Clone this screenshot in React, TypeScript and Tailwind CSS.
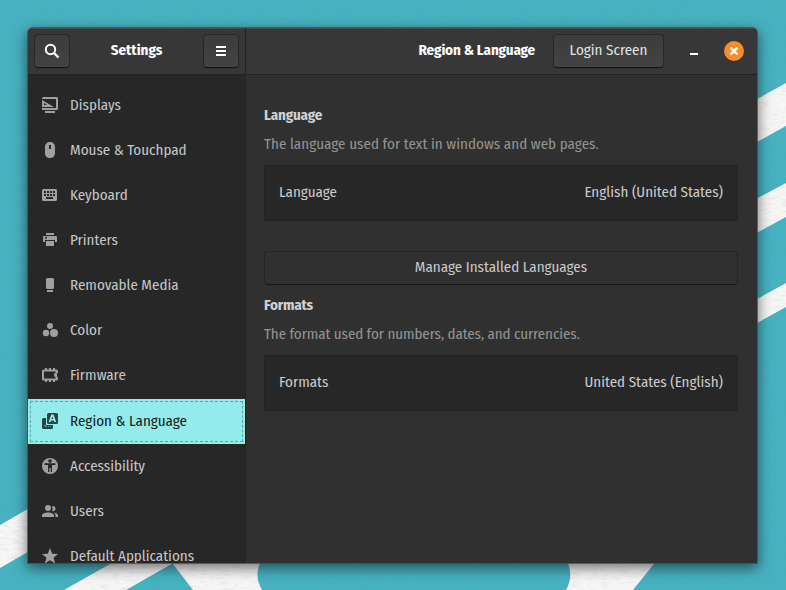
import type { ReactNode } from 'react';

type Item = { label: string; icon: ReactNode; selected?: boolean };

const icons = {
  displays: (
    <path fillRule="evenodd" d="M0 1.500Q0 0 1.500 0H14.500Q16 0 16 1.500V11.500Q16 13 14.500 13H0V11H14V2H0ZM0 3L12 10H0ZM2 6V8H5ZM3 14H13V16H3Z" />
  ),
  mouse: <path fillRule="evenodd" d="M8 0C11 0 13 2 13 5V11C13 14 11 16 8 16S3 14 3 11V5C3 2 5 0 8 0ZM7 3V7H9V3Z" />,
  keyboard: (
    <path fillRule="evenodd" d="M1.500 2H13.500Q15 2 15 3.500V12.500Q15 14 13.500 14H1.500Q0 14 0 12.500V3.500Q0 2 1.500 2ZM2 4V6H4V4ZM5 4V6H7V4ZM8 4V6H10V4ZM11 4V6H13V4ZM2 7V9H4V7ZM5 7V9H7V7ZM8 7V9H10V7ZM11 7V9H13V7ZM4 10V12H11V10Z" />
  ),
  printer: (
    <path fillRule="evenodd" d="M4 1H12V3H4ZM2 4H14Q15 4 15 5V10H13V8H3V10H1V5Q1 4 2 4ZM3 5V6.500H5V5ZM4 9H12V14H4Z" />
  ),
  media: <path d="M5.500 1H10.500Q12 1 12 2.500V10.500Q12 12 10.500 12H5.500Q4 12 4 10.500V2.500Q4 1 5.500 1ZM5 13H11V15H5Z" />,
  color: (
    <>
      <circle cx="8" cy="4" r="3" />
      <circle cx="4" cy="11" r="3.200" />
      <circle cx="12" cy="11" r="4" />
    </>
  ),
  firmware: (
    <path fillRule="evenodd" d="M3 1H5V2.500H7V1H9V2.500H11V1H13V2.500H14.500Q16 2.500 16 4V6H15V10H16V12Q16 13.500 14.500 13.500H13V15H11V13.500H9V15H7V13.500H5V15H3V13.500H1.500Q0 13.500 0 12V4Q0 2.500 1.500 2.500H3ZM2 4.500V11.500H13.500V10L12 9.300V6.700L13.500 6V4.500Z" />
  ),
  region: (
    <>
      <path d="M0 6.500Q0 5 1.500 5H4V12H11V14.500Q11 16 9.500 16H1.500Q0 16 0 14.500Z" />
      <path fillRule="evenodd" d="M6.500 0H14.500Q16 0 16 1.500V9.500Q16 11 14.500 11H6.500Q5 11 5 9.500V1.500Q5 0 6.500 0ZM9.300 1.500L6.700 9H8.600L9 7.500H11.800L12.300 9H14.200L11.500 1.500ZM10.400 3.700L11.300 6H9.500Z" />
      <path d="M2 12.500h2M3 13.500h2M6 13.500h1M8 13.500h1" stroke="#94ebeb" opacity=".5" />
    </>
  ),
  accessibility: (
    <path fillRule="evenodd" d="M8 0A8 8 0 1 1 8 16A8 8 0 1 1 8 0ZM8 1.300A1.800 1.800 0 1 0 8 4.900A1.800 1.800 0 1 0 8 1.300ZM2.500 5.300V7H6V14H7.300V10H8.700V14H10V7H13.500V5.300Z" />
  ),
  users: (
    <>
      <circle cx="6" cy="5" r="3" />
      <path d="M0 14V12.500C0 10.500 3 9.500 6 9.500S12 10.500 12 12.500V14Z" />
      <path d="M10 3.200A2.600 2.600 0 1 1 10 8Q11.200 5.500 10 3.200ZM12 9.500C14.500 9.800 16 11 16 12.500V14H13.500V12.500Q13.500 10.700 12 9.500Z" />
    </>
  ),
  star: <path d="M8 0L10.200 5.700L16 6L11.500 9.700L13.200 15.500L8 12.200L2.800 15.500L4.500 9.700L0 6L5.800 5.700Z" />,
};

const items: Item[] = [
  { label: 'Displays', icon: icons.displays },
  { label: 'Mouse & Touchpad', icon: icons.mouse },
  { label: 'Keyboard', icon: icons.keyboard },
  { label: 'Printers', icon: icons.printer },
  { label: 'Removable Media', icon: icons.media },
  { label: 'Color', icon: icons.color },
  { label: 'Firmware', icon: icons.firmware },
  { label: 'Region & Language', icon: icons.region, selected: true },
  { label: 'Accessibility', icon: icons.accessibility },
  { label: 'Users', icon: icons.users },
  { label: 'Default Applications', icon: icons.star },
];

function Wallpaper() {
  return (
    <svg className="absolute inset-0" width="786" height="590" viewBox="0 0 786 590">
      <defs>
        <filter id="weave" x="0" y="0" width="100%" height="100%">
          <feTurbulence type="fractalNoise" baseFrequency="0.1 0.5" numOctaves="2" seed="4" />
          <feColorMatrix values="0 0 0 0 0.15  0 0 0 0 0.27  0 0 0 0 0.28  0.9 0 0 0 -0.42" />
        </filter>
      </defs>
      <rect width="786" height="590" fill="#46b2c1" />
      <g fill="#f7f6f6">
        <path d="M740 108.500L786 83V126L740 151.500Z" />
        <path d="M740 207.500L786 183V217L740 242Z" />
        <path d="M740 308.500L786 283V307L740 332.500Z" />
        <path d="M0 525L40 502V545L0 568Z" />
        <path d="M64 590L126 555H264Q252 574 262 590H193L172.500 563.500L126 590Z" />
        <path d="M563 555H661L633 590H566Q576 572 563 555Z" />
      </g>
      <rect width="786" height="590" filter="url(#weave)" opacity=".35" />
    </svg>
  );
}

const button =
  'flex h-[34px] items-center justify-center rounded-[4px] border border-[#282828] border-b-[#151515] bg-linear-to-b from-[#3c3c3c] to-[#434343] shadow-[0_1px_1px_rgba(0,0,0,0.15)]';

function SettingCard({ name, value }: { name: string; value: string }) {
  return (
    <div className="mt-[11px] flex h-14 items-center justify-between border border-[#232323] bg-[#272727] px-3.5 pb-0.5 text-[#cbcbcb]">
      <span>{name}</span>
      <span>{value}</span>
    </div>
  );
}

export default function App() {
  return (
    <div className="relative h-[590px] w-[786px] overflow-hidden px-7 pt-7 text-[15px] leading-5 whitespace-nowrap [font-family:'Fira_Sans_Condensed',Roboto,sans-serif]">
      <Wallpaper />
      <div className="relative flex h-[535px] w-[729px] rounded-t-[5px] shadow-[0_0_0_1px_rgba(65,75,75,0.75),0_4px_14px_1px_rgba(0,0,0,0.55)]">
        <aside className="flex w-[218px] flex-col overflow-hidden rounded-tl-[5px] border-r border-[#222] bg-[#272727]">
          <header className="flex h-[47px] shrink-0 items-center justify-between border-t border-b border-t-[#494949] border-b-[#222] bg-[#373737] px-1.5 pb-px">
            <div className={`w-9 ${button}`}>
              <svg width="16" height="16" viewBox="0 0 16 16" fill="none" stroke="#fff" strokeWidth="2">
                <circle cx="6.500" cy="6.500" r="4.700" />
                <path d="M10 10L14.500 14.500" strokeWidth="2.400" />
              </svg>
            </div>
            <h1 className="pb-0.5 font-bold text-white">Settings</h1>
            <div className={`w-9 ${button}`}>
              <svg width="16" height="16" viewBox="0 0 16 16" fill="#fff">
                <path d="M3 3H13V5H3ZM3 7H13V9H3ZM3 11H13V13H3Z" />
              </svg>
            </div>
          </header>
          <nav className="min-h-0 flex-1 overflow-hidden pt-2">
            {items.map((item) => (
              <div
                key={item.label}
                className={`flex h-[45px] items-center ${item.selected ? 'mt-px bg-[#94ebeb] p-0.5 text-[#142222]' : 'px-0.5 text-[#c6c6c6]'}`}
              >
                <div className={`flex h-full flex-1 items-center gap-3 px-3 ${item.selected ? 'outline-1 -outline-offset-1 outline-dashed outline-[#65a5a5]' : ''}`}>
                  <svg
                    className={`-mt-px shrink-0 ${item.selected ? 'fill-[#2a4545]' : 'fill-[#a0a0a0]'}`}
                    width="16"
                    height="16"
                    viewBox="0 0 16 16"
                  >
                    {item.icon}
                  </svg>
                  <span className="pb-0.5">{item.label}</span>
                </div>
              </div>
            ))}
          </nav>
        </aside>
        <main className="flex flex-1 flex-col overflow-hidden rounded-tr-[5px] bg-[#303030]">
          <header className="flex h-[47px] shrink-0 items-center justify-end border-t border-b border-t-[#494949] border-b-[#222] bg-[#373737] pr-[13px] pb-px">
            <h2 className="mr-[18px] pb-0.5 font-bold tracking-[-0.15px] text-white">Region &amp; Language</h2>
            <div className={`w-[111px] pb-0.5 text-[#e2e2e2] ${button}`}>Login Screen</div>
            <div className="mr-[26px] ml-[26px] h-0.5 w-2 translate-y-[3px] bg-white" />
            <div className="flex size-5 items-center justify-center rounded-full bg-[#f48d2b]">
              <svg width="8" height="8" viewBox="0 0 8 8" stroke="#fff" strokeWidth="2.300">
                <path d="M.5 .5L7.500 7.500M7.500 .5L.5 7.500" />
              </svg>
            </div>
          </header>
          <div className="flex flex-col pt-[30px] pr-[19px] pl-[18px]">
            <h3 className="font-bold tracking-[-0.15px] text-[#d0d0d0]">Language</h3>
            <p className="mt-[9px] tracking-[0.04px] text-[#949494]">The language used for text in windows and web pages.</p>
            <SettingCard name="Language" value="English (United States)" />
            <div className="mt-[30px] flex h-[34px] items-center justify-center rounded-[4px] border border-[#252525] border-b-[#171717] bg-[#303030] pb-0.5 text-[#c9c9c9]">
              <span>Manage Installed Languages</span>
            </div>
            <h3 className="mt-2.5 font-bold tracking-[-0.2px] text-[#d0d0d0]">Formats</h3>
            <p className="mt-[9px] tracking-[-0.08px] text-[#949494]">The format used for numbers, dates, and currencies.</p>
            <SettingCard name="Formats" value="United States (English)" />
          </div>
        </main>
      </div>
    </div>
  );
}
